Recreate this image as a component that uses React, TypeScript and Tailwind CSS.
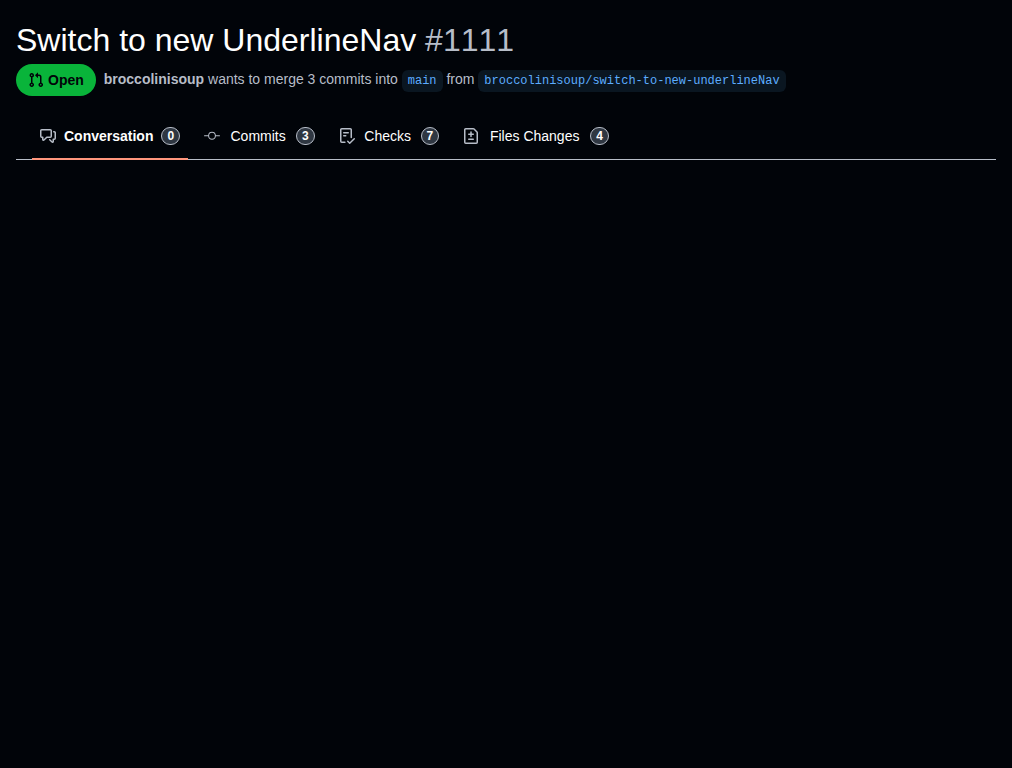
import type { ReactNode } from 'react';

const icons = {
  pullRequest:
    'M1.5 3.25a2.25 2.25 0 1 1 3 2.122v5.256a2.251 2.251 0 1 1-1.5 0V5.372A2.25 2.25 0 0 1 1.5 3.25Zm5.677-.177L9.573.677A.25.25 0 0 1 10 .854V2.5h1A2.5 2.5 0 0 1 13.5 5v5.628a2.251 2.251 0 1 1-1.5 0V5a1 1 0 0 0-1-1h-1v1.646a.25.25 0 0 1-.427.177L7.177 3.427a.25.25 0 0 1 0-.354ZM3.75 2.5a.75.75 0 1 0 0 1.5.75.75 0 0 0 0-1.5Zm0 9.5a.75.75 0 1 0 0 1.5.75.75 0 0 0 0-1.5Zm8.25.75a.75.75 0 1 0 1.5 0 .75.75 0 0 0-1.5 0Z',
  discussion:
    'M1.75 1h8.5c.966 0 1.75.784 1.75 1.75v5.5A1.75 1.75 0 0 1 10.25 10H7.061l-2.574 2.573A1.458 1.458 0 0 1 2 11.543V10h-.25A1.75 1.75 0 0 1 0 8.25v-5.5C0 1.784.784 1 1.75 1ZM1.5 2.75v5.5c0 .138.112.25.25.25h1a.75.75 0 0 1 .75.75v2.19l2.72-2.72a.749.749 0 0 1 .53-.22h3.5a.25.25 0 0 0 .25-.25v-5.5a.25.25 0 0 0-.25-.25h-8.5a.25.25 0 0 0-.25.25Zm13 2a.25.25 0 0 0-.25-.25h-.5a.75.75 0 0 1 0-1.5h.5c.966 0 1.75.784 1.75 1.75v5.5A1.75 1.75 0 0 1 14.25 12H14v1.543a1.458 1.458 0 0 1-2.487 1.03L9.22 12.28a.749.749 0 0 1 .326-1.275.749.749 0 0 1 .734.215l2.22 2.22v-2.19a.75.75 0 0 1 .75-.75h1a.25.25 0 0 0 .25-.25Z',
  commit:
    'M11.87 8.25a3.9 3.9 0 0 1-7.74 0H.5a.5.5 0 0 1 0-1h3.63a3.9 3.9 0 0 1 7.74 0h3.63a.5.5 0 0 1 0 1Zm-.97-.5a2.9 2.9 0 1 0-5.8 0 2.9 2.9 0 0 0 5.8 0Z',
  checklist:
    'M2.5 1.75v11.5c0 .138.112.25.25.25h3.17a.75.75 0 0 1 0 1.5H2.75A1.75 1.75 0 0 1 1 13.25V1.75C1 .784 1.784 0 2.75 0h8.5C12.216 0 13 .784 13 1.75v7.736a.75.75 0 0 1-1.5 0V1.75a.25.25 0 0 0-.25-.25h-8.5a.25.25 0 0 0-.25.25Zm13.274 9.537v-.001l-4.557 4.45a.75.75 0 0 1-1.055-.008l-1.943-1.95a.75.75 0 0 1 1.062-1.058l1.419 1.425 4.026-3.932a.75.75 0 1 1 1.048 1.074ZM4.75 4h4.5a.75.75 0 0 1 0 1.5h-4.5a.75.75 0 0 1 0-1.5ZM4 7.75A.75.75 0 0 1 4.75 7h2a.75.75 0 0 1 0 1.5h-2A.75.75 0 0 1 4 7.75Z',
  fileDiff:
    'M1 1.75C1 .784 1.784 0 2.75 0h7.586c.464 0 .909.184 1.237.513l2.914 2.914c.329.328.513.773.513 1.237v9.586A1.75 1.75 0 0 1 13.25 16H2.75A1.75 1.75 0 0 1 1 14.25Zm1.75-.25a.25.25 0 0 0-.25.25v12.5c0 .138.112.25.25.25h10.5a.25.25 0 0 0 .25-.25V4.664a.25.25 0 0 0-.073-.177l-2.914-2.914a.25.25 0 0 0-.177-.073ZM8 3.25a.75.75 0 0 1 .75.75v1.5h1.5a.75.75 0 0 1 0 1.5h-1.5v1.5a.75.75 0 0 1-1.5 0V7h-1.5a.75.75 0 0 1 0-1.5h1.5V4A.75.75 0 0 1 8 3.25Zm-3 8a.75.75 0 0 1 .75-.75h4.5a.75.75 0 0 1 0 1.5h-4.5a.75.75 0 0 1-.75-.75Z',
};

type IconName = keyof typeof icons;

function Icon({ name }: { name: IconName }) {
  return (
    <svg viewBox="0 0 16 16" className="size-4 shrink-0" fill="currentColor" aria-hidden="true">
      <path d={icons[name]} />
    </svg>
  );
}

function Branch({ children }: { children: ReactNode }) {
  return (
    <a
      href="#"
      className="inline-block rounded-md bg-[#0a1621] px-1.5 py-0.5 font-['Liberation_Mono',monospace] text-xs/[18px] text-[#5cacff]"
    >
      {children}
    </a>
  );
}

const tabs: { label: string; icon: IconName; count: number; current?: boolean }[] = [
  { label: 'Conversation', icon: 'discussion', count: 0, current: true },
  { label: 'Commits', icon: 'commit', count: 3 },
  { label: 'Checks', icon: 'checklist', count: 7 },
  { label: 'Files Changes', icon: 'fileDiff', count: 4 },
];

function Tab({ label, icon, count, current }: (typeof tabs)[number]) {
  return (
    <li className="flex">
      <a
        href="#"
        aria-current={current ? 'page' : undefined}
        className={
          current
            ? '-mb-px flex items-center gap-2 border-b-2 border-[#ff967d] px-2 pt-0.5 font-bold'
            : '-mb-px flex items-center gap-2 border-b-2 border-transparent px-2 pt-0.5'
        }
      >
        <span className="text-[#b7bdc8]">
          <Icon name={icon} />
        </span>
        {/* The hidden bold copy keeps the width steady when a tab becomes current. */}
        <span
          data-label={label}
          className="text-center after:invisible after:block after:h-0 after:overflow-hidden after:font-bold after:content-[attr(data-label)]"
        >
          {label}
        </span>
        <span className="rounded-full border border-[#b7bdc8] bg-[#2f3742] px-[5px] text-xs/4 font-bold">
          {count}
        </span>
      </a>
    </li>
  );
}

export default function App() {
  return (
    <main className="min-h-screen bg-[#010409] p-4 font-['Liberation_Sans',Arial,sans-serif] text-sm/[21px] text-white">
      <header>
        <h1 className="text-[32px]/[48px] font-normal">
          Switch to new UnderlineNav <span className="text-[#b7bdc8] [font-kerning:none]">#1111</span>
        </h1>
        <div className="flex items-center gap-2">
          <span className="flex h-8 shrink-0 items-center gap-1 rounded-full bg-[#09b43a] px-3 font-bold text-[#010409]">
            <Icon name="pullRequest" />
            Open
          </span>
          <p className="text-[#b7bdc8]">
            <span className="font-bold">broccolinisoup</span> wants to merge 3 commits into <Branch>main</Branch> from{' '}
            <Branch>broccolinisoup/switch-to-new-underlineNav</Branch>
          </p>
        </div>
      </header>
      <nav aria-label="Pull Request" className="mt-4 border-b border-[#b7bdc8] px-4">
        <ul className="flex h-[47px] gap-2 whitespace-nowrap">
          {tabs.map((tab) => (
            <Tab key={tab.label} {...tab} />
          ))}
        </ul>
      </nav>
    </main>
  );
}
